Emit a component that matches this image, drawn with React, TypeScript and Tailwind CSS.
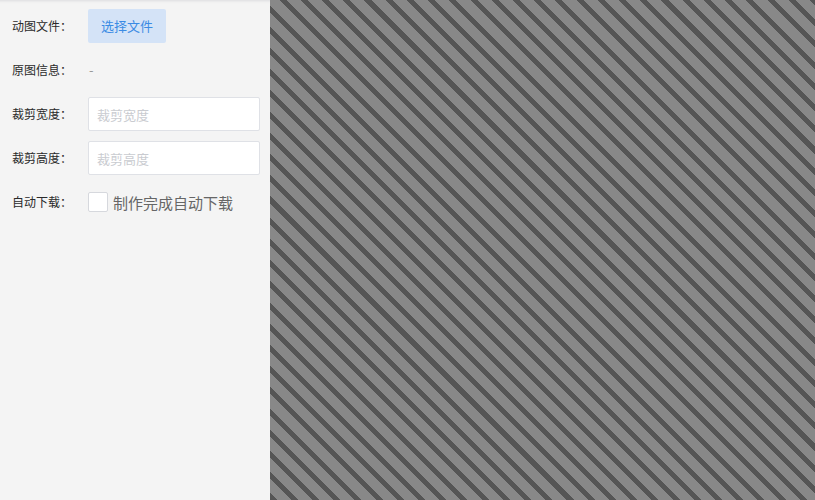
import React from "react";

const font = { fontFamily: '"Noto Sans CJK SC", "Noto Sans", sans-serif' };

function Row({ label, children }: { label: string; children: React.ReactNode }) {
  return (
    <div className="flex h-[34px] items-center">
      <div className="w-[76px] shrink-0 text-[12px] leading-none text-[#2a2a2a]">{label}</div>
      {children}
    </div>
  );
}

export default function App() {
  return (
    <div className="flex h-[500px] w-full overflow-hidden" style={font}>
      <div className="flex w-[270px] shrink-0 flex-col gap-[10px] bg-[#f4f4f4] pl-3 pt-[9px] shadow-[inset_0_4px_3px_-3px_rgba(0,0,40,0.1)]">
        <Row label="动图文件：">
          <button className="h-[34px] w-[78px] rounded-[2px] bg-[#d4e3f7] text-[13px] text-[#3b8be4]">
            选择文件
          </button>
        </Row>
        <Row label="原图信息：">
          <span className="pl-px text-[13px] text-[#999]">-</span>
        </Row>
        <Row label="裁剪宽度：">
          <input
            className="h-[34px] w-[172px] rounded-[2px] border border-[#dfe1e6] bg-white px-2 text-[13px] text-[#333] outline-none placeholder:text-[#c9cbd0]"
            placeholder="裁剪宽度"
          />
        </Row>
        <Row label="裁剪高度：">
          <input
            className="h-[34px] w-[172px] rounded-[2px] border border-[#dfe1e6] bg-white px-2 text-[13px] text-[#333] outline-none placeholder:text-[#c9cbd0]"
            placeholder="裁剪高度"
          />
        </Row>
        <Row label="自动下载：">
          <label className="flex items-center gap-[5px]">
            <span className="h-[20px] w-[20px] rounded-[2px] border border-[#d6d8dd] bg-white" />
            <span className="text-[15px] leading-none text-[#666]">制作完成自动下载</span>
          </label>
        </Row>
      </div>
      <div className="h-full flex-1 bg-[repeating-linear-gradient(45deg,#555555_0px,#555555_5px,#888888_5px,#888888_15px)]" />
    </div>
  );
}
